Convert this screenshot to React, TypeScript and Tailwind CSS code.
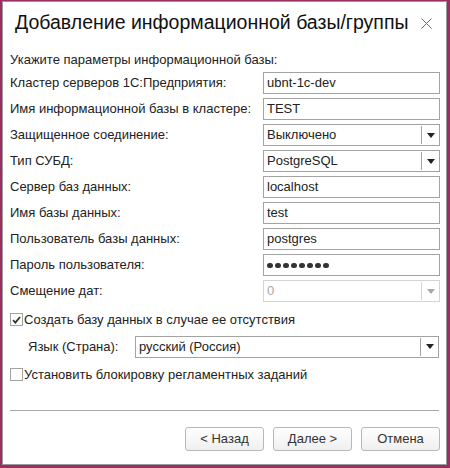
import React from 'react';

const rows: { label: string; value: string; kind: 'text' | 'select' | 'password' | 'disabled' }[] = [
  { label: 'Кластер серверов 1С:Предприятия:', value: 'ubnt-1c-dev', kind: 'text' },
  { label: 'Имя информационной базы в кластере:', value: 'TEST', kind: 'text' },
  { label: 'Защищенное соединение:', value: 'Выключено', kind: 'select' },
  { label: 'Тип СУБД:', value: 'PostgreSQL', kind: 'select' },
  { label: 'Сервер баз данных:', value: 'localhost', kind: 'text' },
  { label: 'Имя базы данных:', value: 'test', kind: 'text' },
  { label: 'Пользователь базы данных:', value: 'postgres', kind: 'text' },
  { label: 'Пароль пользователя:', value: '', kind: 'password' },
  { label: 'Смещение дат:', value: '0', kind: 'disabled' },
];

const Arrow = ({ disabled }: { disabled?: boolean }) => (
  <svg width="8" height="5" viewBox="0 0 8 5">
    <path d="M0 0h8L4 5z" fill={disabled ? '#a8a8a8' : '#222'} />
  </svg>
);

const Field = ({ value, kind }: { value: string; kind: string }) => {
  const disabled = kind === 'disabled';
  const select = kind === 'select' || disabled;
  return (
    <div
      className={`flex h-[22px] items-center border bg-white ${disabled ? 'border-[#d4d4d4] text-[#a8a8a8]' : 'border-[#a3a3a3] text-[#222]'}`}
    >
      <div className="flex-1 truncate pl-[3px]">
        {kind === 'password' ? (
          <span className="flex gap-[2.5px] pt-[1px]">
            {Array.from({ length: 8 }).map((_, i) => (
              <span key={i} className="block h-[5.5px] w-[5.5px] rounded-full bg-[#333]" />
            ))}
          </span>
        ) : (
          value
        )}
      </div>
      {select && (
        <div className={`flex h-[18px] w-[18px] items-center justify-center border-l ${disabled ? 'border-[#d4d4d4]' : 'border-[#a3a3a3]'}`}>
          <Arrow disabled={disabled} />
        </div>
      )}
    </div>
  );
};

const Check = ({ checked }: { checked?: boolean }) => (
  <span className="flex h-[13px] w-[13px] items-center justify-center border border-[#a3a3a3] bg-white">
    {checked && (
      <svg width="9" height="8" viewBox="0 0 9 8">
        <path d="M1 4.2l2.4 2.4L8 1" stroke="#333" strokeWidth="1.8" fill="none" />
      </svg>
    )}
  </span>
);

export default function App() {
  return (
    <div className="h-[468px] w-[450px] bg-[#9b2f62] pb-[3px] pl-[2px] pr-[3px] pt-[1px]" style={{ fontFamily: '"Liberation Sans", Arial, sans-serif' }}>
      <div className="flex h-full flex-col border border-[#9a9a9a] bg-white text-[13px] text-[#222]">
        <div className="flex h-[40px] items-center justify-between pl-[12px] pr-[14px] pt-[2px]">
          <span className="text-[19.5px] text-[#111]">Добавление информационной базы/группы</span>
          <svg width="11" height="11" viewBox="0 0 11 11">
            <path d="M0.5 0.5l10 10M10.5 0.5l-10 10" stroke="#666" strokeWidth="1" />
          </svg>
        </div>
        <div className="flex flex-1 flex-col px-[7px]">
          <div className="mt-[10px] leading-[16px]">Укажите параметры информационной базы:</div>
          <div className="mt-[4px] flex flex-col gap-[4px]">
            {rows.map((r) => (
              <div key={r.label} className="grid grid-cols-[253px_177px] items-center">
                <span>{r.label}</span>
                <Field value={r.value} kind={r.kind} />
              </div>
            ))}
          </div>
          <div className="mt-[8px] flex items-center gap-[1px]">
            <Check checked />
            <span>Создать базу данных в случае ее отсутствия</span>
          </div>
          <div className="mt-[6px] flex items-center">
            <span className="w-[125px] pl-[18px]">Язык (Страна):</span>
            <div className="flex-1">
              <Field value="русский (Россия)" kind="select" />
            </div>
          </div>
          <div className="mt-[7px] flex items-center gap-[1px]">
            <Check />
            <span>Установить блокировку регламентных заданий</span>
          </div>
          <div className="mt-[26px] border-t border-[#a8a8a8]" />
          <div className="-mr-[1px] mt-[16px] flex justify-end gap-[9px]">
            {['< Назад', 'Далее >', 'Отмена'].map((b) => (
              <button key={b} className="h-[24px] w-[79px] rounded-[3px] border border-[#b8b8b8] bg-gradient-to-b from-white to-[#efefef] text-[13px] text-[#333]">
                {b}
              </button>
            ))}
          </div>
        </div>
      </div>
    </div>
  );
}
